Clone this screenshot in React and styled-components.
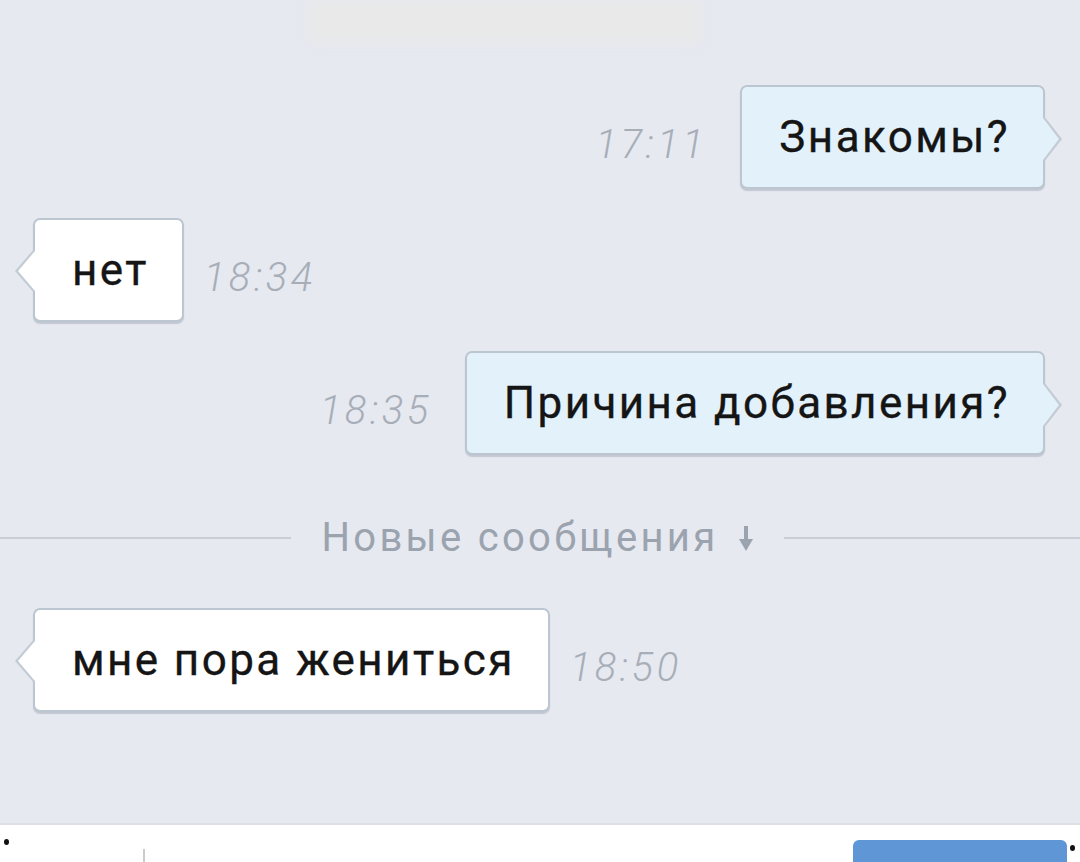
import React from 'react';
import styled, { createGlobalStyle, css } from 'styled-components';

const GlobalStyle = createGlobalStyle`
  html, body {
    margin: 0;
    padding: 0;
    background: #e6e9f0;
  }
  body {
    font-family: Roboto, 'Noto Sans', 'Liberation Sans', sans-serif;
    -webkit-font-smoothing: antialiased;
  }
`;

const Screen = styled.div`
  width: 1080px;
  height: 862px;
  overflow: hidden;
  display: flex;
  flex-direction: column;
  background: #e6e9f0;
`;

const TopSmudge = styled.div`
  height: 85px;
  padding-left: 310px;
`;

const Smudge = styled.div`
  width: 390px;
  height: 42px;
  background: #e9e9e9;
  filter: blur(6px);
`;

const Feed = styled.div`
  display: flex;
  flex-direction: column;
  gap: 29px;
`;

const Row = styled.div`
  display: flex;
  align-items: center;
  gap: ${p => (p.$out ? '33px' : '20px')};
  padding: ${p => (p.$out ? '0 35px 0 0' : '0 0 0 33px')};
  justify-content: ${p => (p.$out ? 'flex-end' : 'flex-start')};
`;

const Bubble = styled.div`
  position: relative;
  height: 104px;
  box-sizing: border-box;
  display: flex;
  align-items: center;
  padding: 0 33px 0 37px;
  font-size: 44px;
  color: #151515;
  letter-spacing: 2.4px;
  -webkit-text-stroke: 0.35px #151515;
  border: 2px solid #bcc6d0;
  border-radius: 7px;
  box-shadow: 0 2px 1px rgba(150, 160, 175, 0.45);
  background: ${p => (p.$out ? '#e3f1fb' : '#ffffff')};

  &::before,
  &::after {
    content: '';
    position: absolute;
    top: 29px;
    border-style: solid;
    border-color: transparent;
  }

  ${p =>
    p.$out
      ? css`
          &::before {
            right: -19px;
            border-width: 23px 0 23px 18px;
            border-left-color: #c3ccd5;
          }
          &::after {
            right: -16px;
            top: 31px;
            border-width: 21px 0 21px 16px;
            border-left-color: #e3f1fb;
          }
        `
      : css`
          &::before {
            left: -20px;
            border-width: 22px 19px 22px 0;
            border-right-color: #c3ccd5;
          }
          &::after {
            left: -17px;
            top: 31px;
            border-width: 20px 17px 20px 0;
            border-right-color: #ffffff;
          }
        `}
`;

const Time = styled.span`
  font-size: 40px;
  font-style: italic;
  font-weight: 300;
  color: #a8aeb8;
  letter-spacing: 3.5px;
  margin-top: 14px;
`;

const Divider = styled.div`
  display: flex;
  align-items: center;
  gap: 30px;
  margin: 59px 0 47px;
`;

const Line = styled.div`
  flex: ${p => p.$grow};
  height: 2px;
  background: #c9ced6;
`;

const DividerText = styled.span`
  display: flex;
  align-items: center;
  gap: 20px;
  font-size: 40px;
  color: #9aa3ae;
  letter-spacing: 3.3px;
`;

const Arrow = styled.svg`
  flex-shrink: 0;
  width: 16px;
  height: 26px;
  margin-top: 2px;
`;

const Composer = styled.div`
  position: relative;
  box-sizing: border-box;
  height: 39px;
  margin-top: auto;
  background: #ffffff;
  border-top: 2px solid #dde1e6;
  display: flex;
  align-items: flex-start;
  padding: 15px 13px 0 0;
`;

const Cursor = styled.div`
  width: 2px;
  height: 16px;
  margin: 9px 0 0 143px;
  background: #c9cdd3;
`;

const SendButton = styled.div`
  margin-left: auto;
  width: 214px;
  height: 40px;
  border-radius: 6px 6px 0 0;
  background: #5e96d6;
`;

const Dot = styled.span`
  position: absolute;
  width: 5px;
  height: 6px;
  border-radius: 50%;
  background: #111;
  top: ${p => p.$top}px;
  ${p => (p.$right ? 'right: 5px;' : 'left: 4px;')}
`;

const messages = [
  { out: true, text: 'Знакомы?', time: '17:11' },
  { out: false, text: 'нет', time: '18:34' },
  { out: true, text: 'Причина добавления?', time: '18:35' },
];

const Message = ({ out, text, time }) => (
  <Row $out={out}>
    {out && <Time>{time}</Time>}
    <Bubble $out={out}>{text}</Bubble>
    {!out && <Time>{time}</Time>}
  </Row>
);

export default function App() {
  return (
    <Screen>
      <GlobalStyle />
      <TopSmudge>
        <Smudge />
      </TopSmudge>
      <Feed>
        {messages.map((m, i) => (
          <Message key={i} {...m} />
        ))}
      </Feed>
      <Divider>
        <Line $grow={283} />
        <DividerText>
          Новые сообщения
          <Arrow viewBox="0 0 16 26">
            <rect x="6" y="0" width="4" height="15" fill="#9aa3ae" />
            <path d="M1 13 L15 13 L8 25 Z" fill="#9aa3ae" />
          </Arrow>
        </DividerText>
        <Line $grow={287} />
      </Divider>
      <Message out={false} text="мне пора жениться" time="18:50" />
      <Composer>
        <Dot $top={14} />
        <Cursor />
        <SendButton />
        <Dot $top={20} $right />
      </Composer>
    </Screen>
  );
}
